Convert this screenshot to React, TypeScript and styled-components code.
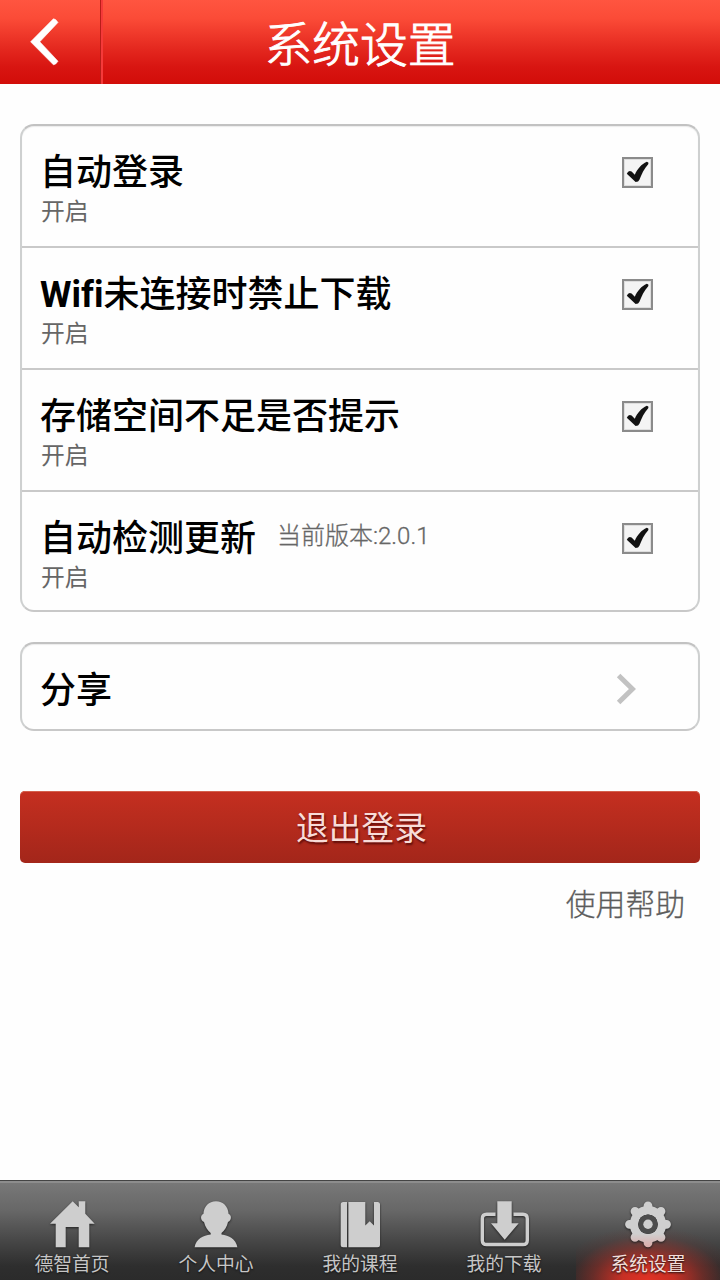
import React from 'react';
import styled, { createGlobalStyle } from 'styled-components';

const GlobalStyle = createGlobalStyle`
  * { box-sizing: border-box; }
  body { margin: 0; background: #fefefe; font-family: Roboto, "Noto Sans CJK SC", sans-serif; }
  button { font-family: inherit; border: 0; padding: 0; cursor: pointer; }
`;

const Screen = styled.div`
  width: 720px;
  height: 1280px;
  display: flex;
  flex-direction: column;
  overflow: hidden;
`;

const Header = styled.header`
  height: 84px;
  flex: none;
  display: grid;
  grid-template-columns: 103px 1fr 103px;
  grid-template-rows: 84px;
  background: linear-gradient(#ff5540 0%, #fb4b37 22%, #e4281f 58%, #d81511 80%, #d20d09 100%);
`;

const BackButton = styled.button`
  display: flex;
  align-items: center;
  padding-left: 30px;
  background: none;
  border-right: 2px solid #f43a3a;
  box-shadow: inset -1px 0 #b91d18;
`;

const HeaderTitle = styled.h1`
  margin: 0;
  padding-top: 4px;
  text-align: center;
  color: #fff;
  font-size: 47.8px;
  font-weight: 300;
  line-height: 84px;
  height: 84px;
  -webkit-text-stroke: 0.9px #fff;
`;

const Content = styled.main`
  flex: 1;
  display: flex;
  flex-direction: column;
  padding: 40px 20px 0;
`;

const Card = styled.section`
  border: 2px solid #ced0d0;
  border-top-color: #c2c2c2;
  border-bottom-color: #c8c8c8;
  border-radius: 14px;
  background: #fefefe;
  box-shadow: inset 0 1px 1px #ececec;
  margin-bottom: 30px;
`;

const Row = styled.div<{ $last?: boolean }>`
  height: ${p => (p.$last ? 118 : 122)}px;
  display: flex;
  justify-content: space-between;
  padding: 23px 45px 0 19px;
  border-bottom: ${p => (p.$last ? '0' : '2px solid #c9c9c9')};
`;

const ShareRow = styled.div`
  height: 85px;
  display: flex;
  align-items: center;
  justify-content: space-between;
  padding: 5px 60px 0 19px;
`;

const TitleLine = styled.div`
  display: flex;
  align-items: center;
  height: 44px;
`;

const Title = styled.span`
  margin: 4px 0 0 -1px;
  font-size: 36px;
  font-weight: 500;
  font-variant-ligatures: none;
  line-height: 44px;
  color: #000;
`;

const Latin = styled.b`
  font-weight: 700;
`;

const Version = styled.span`
  margin: -8px 0 0 21px;
  font-size: 24px;
  font-weight: 300;
  color: #666;
  -webkit-text-stroke: 0.3px #666;
`;

const Status = styled.div`
  font-size: 23.8px;
  line-height: 38px;
  color: #666;
`;

const CheckBox = styled.button`
  width: 31px;
  height: 31px;
  margin-top: 8px;
  display: flex;
  align-items: center;
  justify-content: center;
  border: 2px solid #8b8b8b;
  background: #f4f4f4;
  box-shadow: inset 0 0 0 1px #dedede;
`;

const LogoutButton = styled.button`
  height: 72px;
  flex: none;
  margin-top: 30px;
  padding: 5px 0 0 3px;
  border-radius: 5px;
  background: linear-gradient(#c52f20, #a3261a);
  box-shadow: inset 0 1px #d4604c;
  color: #f8dcd8;
  font-size: 32.8px;
  line-height: 67px;
  text-shadow: 1px 2px 2px rgba(60, 0, 0, 0.7);
`;

const HelpLink = styled.a`
  align-self: flex-end;
  margin: 20px 15px 0 0;
  font-size: 29.8px;
  line-height: 44px;
  font-weight: 300;
  color: #5c5c5c;
  -webkit-text-stroke: 0.3px #5c5c5c;
`;

const NavBar = styled.nav`
  height: 100px;
  flex: none;
  display: grid;
  grid-template-columns: repeat(5, 1fr);
  grid-template-rows: 99px;
  border-top: 1px solid #444;
  box-shadow: inset 0 2px #8d8d8d;
  background: linear-gradient(#797979 0%, #676767 30%, #454545 62%, #2e2e2e 86%, #2b2b2b 100%);
`;

const NavItem = styled.a<{ $active?: boolean }>`
  display: flex;
  flex-direction: column;
  align-items: center;
  padding-top: 19px;
  color: ${p => (p.$active ? '#f3dedb' : '#c6c6c6')};
  font-size: 18.8px;
  line-height: 35px;
  text-shadow: 0 1px 2px #111;
  background: ${p =>
    p.$active
      ? 'radial-gradient(ellipse 92px 54px at 50% 100%, #e03224 0%, rgba(212,48,36,.92) 28%, rgba(175,45,36,.46) 60%, rgba(120,40,35,.14) 82%, rgba(120,40,35,0) 100%)'
      : 'none'};
`;

const NavIcon = styled.svg`
  width: 50px;
  height: 48px;
  flex: none;
  overflow: visible;
  filter: drop-shadow(0 1px 1px #222);
`;

const settings = [
  { title: '自动登录' },
  { latin: 'Wifi', title: '未连接时禁止下载' },
  { title: '存储空间不足是否提示' },
  { title: '自动检测更新', note: '当前版本:2.0.1' },
];

const HomeIcon = () => (
  <NavIcon viewBox="-1 0 50 48" fill="#cecece">
    <path d="M24.7 1.2 30.7 7.2V1.2H37.3V13.8L46.7 23.7H41.3V47.3H30.7V27H17.7V47.3H7.7V23.7H2Z" />
  </NavIcon>
);

const PersonIcon = () => (
  <NavIcon viewBox="-1 0 50 48" fill="#cecece">
    <path d="M24 1.3C16.8 1.3 11.8 6.5 11.4 14C8.2 14.8 8.2 20.5 12 22C13.2 27 15.8 30.5 18.7 33V34.5C11 35.5 4.2 38.5 2.6 47.3H45.4C43.8 38.5 37 35.5 29.5 34.5V33C32.4 30.5 34.9 27 36 22C39.8 20.5 39.8 14.8 36.6 14C36.2 6.5 31.2 1.3 24 1.3Z" />
  </NavIcon>
);

const BookIcon = () => (
  <NavIcon viewBox="-1 0 50 48" fill="#cecece">
    <path d="M7.2 2H11V47.3H7.2Q4.7 47.3 4.7 44.8V4.5Q4.7 2 7.2 2ZM12.4 2H29.3V25.5L33.7 21.2 38 25.5V2H41.5Q44 2 44 4.5V44.8Q44 47.3 41.5 47.3H12.4Z" />
  </NavIcon>
);

const DownloadIcon = () => (
  <NavIcon viewBox="-1 0 50 48" fill="#cecece">
    <path d="M15.5 14.3H6.7Q2.3 14.3 2.3 18.7V40.2Q2.3 44.5 6.7 44.5H42.9Q47.3 44.5 47.3 40.2V18.7Q47.3 14.3 42.9 14.3H33.5" fill="none" stroke="#cecece" strokeWidth="3.4" />
    <path d="M17.3 1.2H31.7V23.2H38.7L24.7 39.8 11 23.2H17.3Z" />
  </NavIcon>
);

const GearIcon = () => (
  <NavIcon viewBox="-1 0 50 48">
    <defs>
      <linearGradient id="gear" gradientUnits="userSpaceOnUse" x1="0" y1="0" x2="0" y2="48">
        <stop offset="0.7" stopColor="#cfcfcf" />
        <stop offset="1" stopColor="#dcaaa7" />
      </linearGradient>
    </defs>
    <g stroke="url(#gear)" fill="none">
      <circle cx="24" cy="24.3" r="14" strokeWidth="8.4" />
      <g strokeWidth="8.8" strokeLinecap="round">
        <path d="M24 9V5.8M24 39.6V42.8M8.7 24.3H5.5M39.3 24.3H42.5M13.1 13.4 11 11.3M34.9 13.4 37 11.3M13.1 35.2 11 37.3M34.9 35.2 37 37.3" />
      </g>
    </g>
    <circle cx="24" cy="24.3" r="9.8" fill="#4c4c4c" />
    <circle cx="24" cy="24.3" r="4.7" fill="#cfcfcf" />
  </NavIcon>
);

const tabs = [
  { label: '德智首页', Icon: HomeIcon },
  { label: '个人中心', Icon: PersonIcon },
  { label: '我的课程', Icon: BookIcon },
  { label: '我的下载', Icon: DownloadIcon },
  { label: '系统设置', Icon: GearIcon, active: true },
];

export default function App() {
  return (
    <Screen>
      <GlobalStyle />
      <Header>
        <BackButton aria-label="返回">
          <svg width="30" height="48" viewBox="0 0 30 48">
            <path d="M23.4 .8 .6 23.8 23.4 46.8Q25.6 47 28 43.2L9.8 23.8 28 4.4Q25.6 .5 23.4 .8Z" fill="#fff" stroke="#fff" strokeWidth=".6" />
          </svg>
        </BackButton>
        <HeaderTitle>系统设置</HeaderTitle>
      </Header>
      <Content>
        <Card>
          {settings.map((s, i) => (
            <Row key={s.title} $last={i === settings.length - 1}>
              <div>
                <TitleLine>
                  <Title>
                    {s.latin && <Latin>{s.latin}</Latin>}
                    {s.title}
                  </Title>
                  {s.note && <Version>{s.note}</Version>}
                </TitleLine>
                <Status>开启</Status>
              </div>
              <CheckBox role="checkbox" aria-checked="true" aria-label={s.title}>
                <svg width="27" height="27" viewBox="0 0 27 27">
                  <path d="M2.8 14.8Q4.5 10.8 7.6 12.6L10.8 15.8C13.4 10 17.5 5 22.8 2.8Q25 3 24.4 5C20 9.8 17.6 15.2 15.4 20.8Q14.6 23 11.6 23Z" fill="#111" />
                </svg>
              </CheckBox>
            </Row>
          ))}
        </Card>
        <Card>
          <ShareRow>
            <Title>分享</Title>
            <svg width="22" height="32" viewBox="0 0 22 32">
              <path d="M2.6 2.5 16.4 16 2.6 29.5" fill="none" stroke="#c2c2c2" strokeWidth="5" />
            </svg>
          </ShareRow>
        </Card>
        <LogoutButton>退出登录</LogoutButton>
        <HelpLink>使用帮助</HelpLink>
      </Content>
      <NavBar>
        {tabs.map(({ label, Icon, active }) => (
          <NavItem key={label} $active={active}>
            <Icon />
            {label}
          </NavItem>
        ))}
      </NavBar>
    </Screen>
  );
}
